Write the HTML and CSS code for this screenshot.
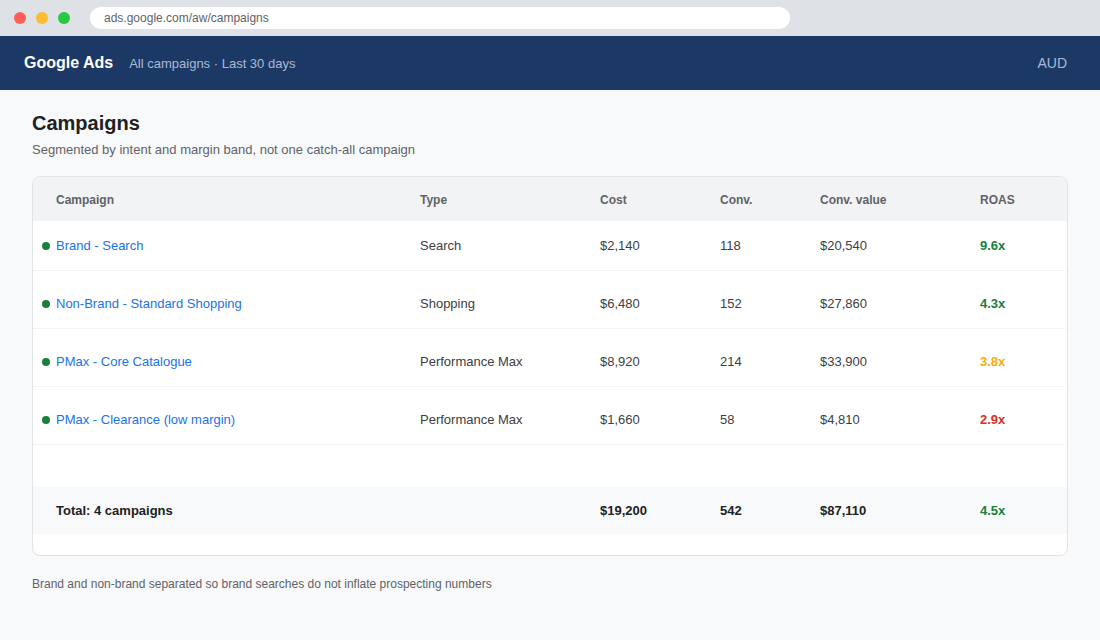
FILE: index.html
```html
<!DOCTYPE html>
<html lang="en">

<head>
    <meta charset="UTF-8">
    <meta name="viewport" content="width=device-width, initial-scale=1.0">
    <title>Campaigns - Google Ads</title>
    <link rel="stylesheet" href="styles.css">
</head>

<body>
    <div class="chrome">
        <span class="light red"></span>
        <span class="light yellow"></span>
        <span class="light green"></span>
        <div class="url">ads.google.com/aw/campaigns</div>
    </div>

    <div class="topbar">
        <div class="brand">Google Ads</div>
        <div class="scope">All campaigns · Last 30 days</div>
        <div class="currency">AUD</div>
    </div>

    <div class="main">
        <h1>Campaigns</h1>
        <p class="sub">Segmented by intent and margin band, not one catch-all campaign</p>

        <div class="card">
            <div class="row head">
                <div class="name">Campaign</div>
                <div>Type</div>
                <div>Cost</div>
                <div>Conv.</div>
                <div>Conv. value</div>
                <div>ROAS</div>
            </div>

            <div class="row">
                <div class="name"><span class="dot"></span><a href="#">Brand - Search</a></div>
                <div>Search</div>
                <div>$2,140</div>
                <div>118</div>
                <div>$20,540</div>
                <div class="roas good">9.6x</div>
            </div>
            <div class="row">
                <div class="name"><span class="dot"></span><a href="#">Non-Brand - Standard Shopping</a></div>
                <div>Shopping</div>
                <div>$6,480</div>
                <div>152</div>
                <div>$27,860</div>
                <div class="roas good">4.3x</div>
            </div>
            <div class="row">
                <div class="name"><span class="dot"></span><a href="#">PMax - Core Catalogue</a></div>
                <div>Performance Max</div>
                <div>$8,920</div>
                <div>214</div>
                <div>$33,900</div>
                <div class="roas warn">3.8x</div>
            </div>
            <div class="row">
                <div class="name"><span class="dot"></span><a href="#">PMax - Clearance (low margin)</a></div>
                <div>Performance Max</div>
                <div>$1,660</div>
                <div>58</div>
                <div>$4,810</div>
                <div class="roas bad">2.9x</div>
            </div>

            <div class="row total">
                <div class="name">Total: 4 campaigns</div>
                <div></div>
                <div>$19,200</div>
                <div>542</div>
                <div>$87,110</div>
                <div class="roas good">4.5x</div>
            </div>
        </div>

        <p class="note">Brand and non-brand separated so brand searches do not inflate prospecting numbers</p>
    </div>
</body>

</html>
```

FILE: styles.css
```css
body,
html {
    margin: 0;
    padding: 0;
}

* {
    box-sizing: border-box;
}

body {
    font-family: "Liberation Sans", Arial, sans-serif;
    background: #f8f9fa;
    color: #3c4043;
    height: 640px;
    overflow: hidden;
}

/* browser bar */
.chrome {
    height: 36px;
    background: #dee1e6;
    display: flex;
    align-items: center;
    padding-left: 14px;
}

.light {
    width: 12px;
    height: 12px;
    border-radius: 50%;
    margin-right: 10px;
}

.red { background: #ff5f57; }
.yellow { background: #febc2e; }
.green { background: #28c840; }

.url {
    margin-left: 10px;
    width: 700px;
    height: 22px;
    border-radius: 11px;
    background: #fff;
    font-size: 12px;
    line-height: 22px;
    padding-left: 14px;
    color: #5f6368;
}

/* app header */
.topbar {
    height: 54px;
    background: #1c3966;
    display: flex;
    align-items: center;
    padding: 0 33px 0 24px;
}

.brand {
    color: #fff;
    font-size: 16px;
    font-weight: bold;
}

.scope {
    margin-left: 16px;
    color: #a9b9d4;
    font-size: 13px;
}

.currency {
    margin-left: auto;
    color: #a9b9d4;
    font-size: 14px;
}

/* content */
.main {
    padding: 21px 32px 0;
}

h1 {
    margin: 0;
    font-size: 20px;
    line-height: 24px;
    color: #202124;
}

.sub {
    margin: 7px 0 0;
    font-size: 13px;
    line-height: 16px;
    color: #5f6368;
}

.card {
    margin-top: 18px;
    background: #fff;
    border: 1px solid #e1e3e6;
    border-radius: 8px;
    overflow: hidden;
    padding-bottom: 21px;
}

.row {
    display: grid;
    grid-template-columns: 387px 180px 120px 100px 160px 1fr;
    align-items: center;
    font-size: 13px;
    line-height: 17px;
    padding: 16px 0;
    border-bottom: 1px solid #f1f3f4;
}

.row + .row {
    margin-top: 8px;
}

.row .name {
    display: flex;
    align-items: center;
    padding-left: 9px;
}

.row.head {
    height: 44px;
    padding: 2px 0 0;
    border-bottom: none;
    background: #f1f3f4;
    font-size: 12px;
    font-weight: bold;
    color: #5f6368;
}

.row.head + .row {
    margin-top: 0;
}

.row.head .name,
.row.total .name {
    padding-left: 23px;
}

.dot {
    width: 8px;
    height: 8px;
    border-radius: 50%;
    background: #188038;
    margin-right: 6px;
}

.name a {
    color: #1a73e8;
    text-decoration: none;
}

.roas {
    font-weight: bold;
}

.good { color: #188038; }
.warn { color: #f9ab00; }
.bad { color: #d93025; }

.row.total {
    margin-top: 41px;
    height: 48px;
    padding: 0;
    border-bottom: none;
    background: #f8f9fa;
    font-weight: bold;
    color: #202124;
}

.row.total .roas {
    color: #188038;
}

.note {
    margin: 21px 0 0;
    font-size: 12px;
    line-height: 15px;
    color: #5f6368;
}
```
